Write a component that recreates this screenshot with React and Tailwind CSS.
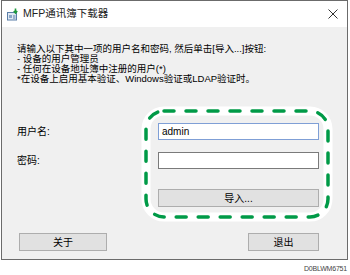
import React from 'react';

const font = { fontFamily: '"Liberation Sans", "Noto Sans CJK SC", sans-serif' };

const TitleIcon = () => (
    <svg width="13" height="13" viewBox="0 0 13 13" className="shrink-0">
        <rect x="1.5" y="4.5" width="9" height="7.5" fill="#dfe8f3" stroke="#5b7fa8" />
        <rect x="3" y="7" width="3" height="3" fill="#8aa6c8" />
        <path d="M7 8h2.5M7 10h2.5" stroke="#5b7fa8" strokeWidth="1" />
        <path d="M9.5 0.5v4M7.8 3l1.7 2 1.7-2" stroke="#1e9a3c" strokeWidth="1.6" fill="none" />
    </svg>
);

const Button = ({ children, className = '' }) => (
    <div className={`h-[18px] bg-[#e1e1e1] border border-[#adadad] flex items-center justify-center text-[10px] text-black ${className}`}>
        {children}
    </div>
);

export default function App() {
    return (
        <div className="relative w-[350px] h-[275px] bg-white overflow-hidden" style={font}>
            <div className="ml-[1px] w-[347px] h-[260px] border border-[#6b6b6b] flex flex-col">
                <div className="h-[26px] bg-white flex items-center pl-[4px] pr-[9px]">
                    <TitleIcon />
                    <span className="ml-[4px] text-[10.5px] text-[#222]">MFP通讯簿下载器</span>
                    <svg width="10" height="10" viewBox="0 0 10 10" className="ml-auto">
                        <path d="M0.5 0.5l9 9M9.5 0.5l-9 9" stroke="#333" strokeWidth="1" />
                    </svg>
                </div>
                <div className="flex-1 bg-[#f0f0f0] pl-[15px] pt-[17px] text-[10px] text-black">
                    <div className="leading-[10px] whitespace-nowrap text-[9.5px]">
                        <p>请输入以下其中一项的用户名和密码, 然后单击[导入...]按钮:</p>
                        <p>- 设备的用户管理员</p>
                        <p>- 任何在设备地址簿中注册的用户(*)</p>
                        <p>*在设备上启用基本验证、Windows验证或LDAP验证时。</p>
                    </div>
                    <div className="mt-[39px] grid grid-cols-[141px_161px] gap-y-[12px] items-center">
                        <span>用户名:</span>
                        <div className="h-[17px] bg-white border border-[#7f9fd6] flex items-center pl-[3px] text-[10px]">admin</div>
                        <span>密码:</span>
                        <div className="h-[17px] bg-white border border-[#7a7a7a]" />
                    </div>
                    <div className="mt-[20px] ml-[141px] w-[161px]">
                        <Button>导入...</Button>
                    </div>
                    <div className="mt-[26px] flex pl-[2px]">
                        <Button className="w-[88px]">关于</Button>
                        <Button className="w-[71px] ml-auto mr-[28px]">退出</Button>
                    </div>
                </div>
            </div>
            <div className="pr-[3px] pt-[4px] text-right text-[7px] tracking-[-0.2px] text-[#444]">D0BLWM6751</div>
            <svg width="350" height="275" className="absolute left-0 top-0 pointer-events-none">
                <rect x="146" y="111" width="182" height="106" rx="18" fill="none" stroke="#ffffff" strokeWidth="9" />
                <rect x="146" y="111" width="182" height="106" rx="18" fill="none" stroke="#009a47" strokeWidth="3.5" strokeDasharray="10 12" strokeLinecap="round" />
            </svg>
        </div>
    );
}
